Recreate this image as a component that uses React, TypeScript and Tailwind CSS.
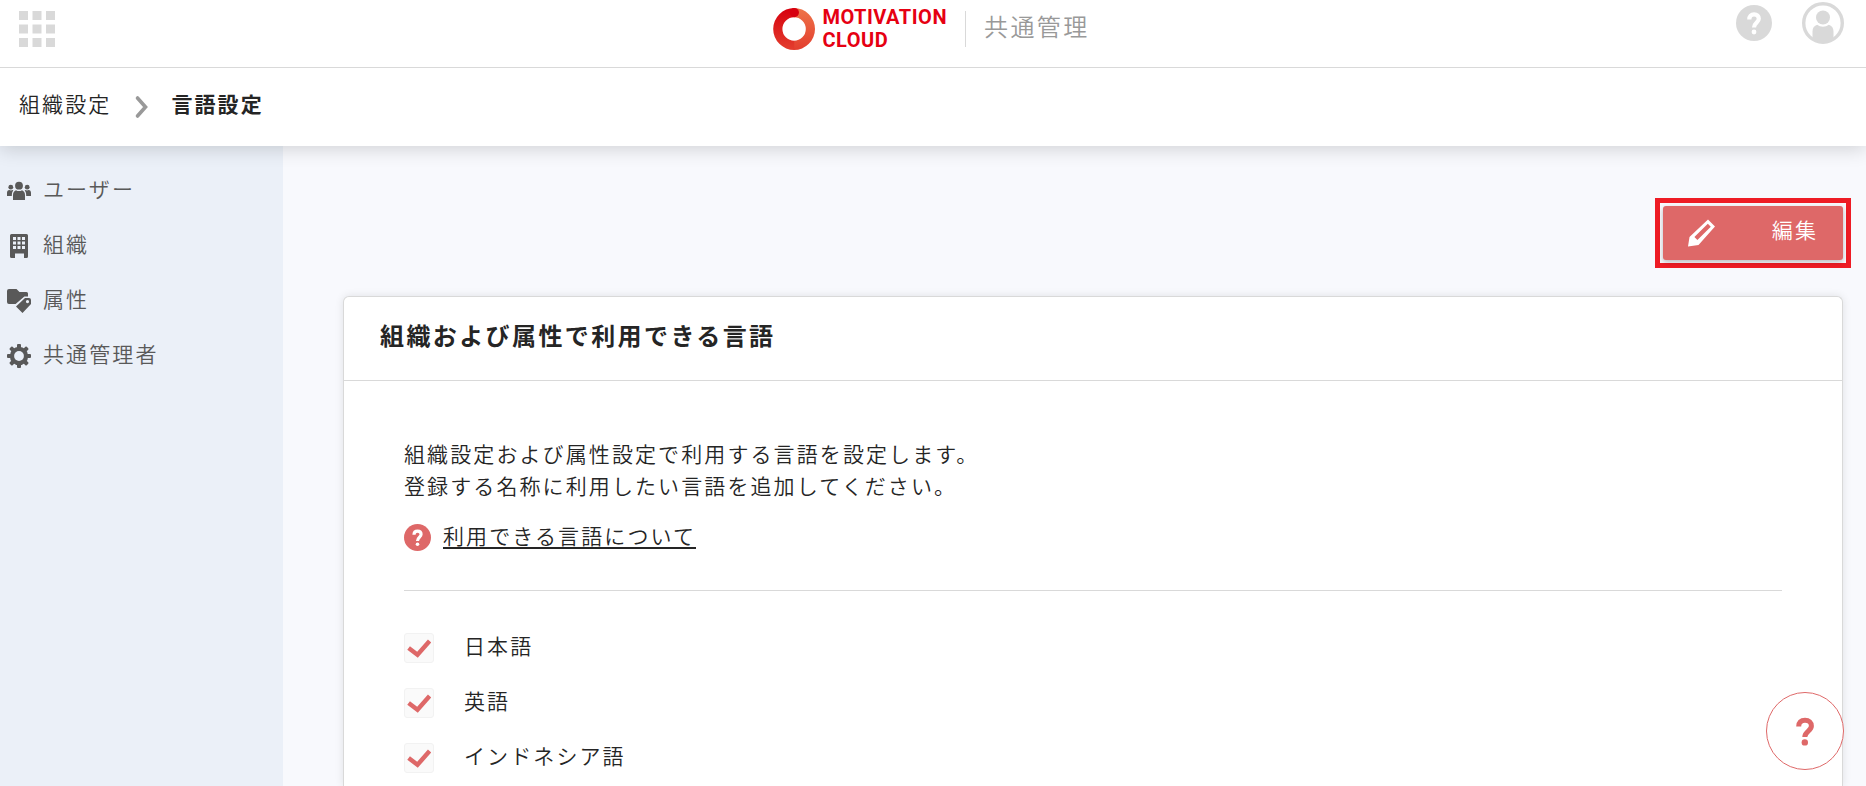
import { useState } from 'react';
import type { ReactNode } from 'react';

// -------------------------------------------------------------
// Icons
// -------------------------------------------------------------
function GridIcon() {
  return (
    <svg className="size-9" viewBox="0 0 24 24" fill="currentColor" aria-hidden="true">
      {[0, 9, 18].map((y) => [0, 9, 18].map((x) => <rect key={`${x}-${y}`} x={x} y={y} width="6" height="6" />))}
    </svg>
  );
}

function HelpIcon({ className }: { className: string }) {
  return (
    <svg className={className} viewBox="0 0 36 36" aria-hidden="true">
      <circle cx="18" cy="18" r="18" fill="currentColor" />
      <path d="M13.3 14.4C13.3 11.4 15.2 9.4 18.1 9.4C21 9.4 22.8 11.2 22.8 13.7C22.8 17.4 18 17.6 18 22.6" fill="none" stroke="#fff" strokeWidth="4.2" />
      <circle cx="18" cy="27" r="2.4" fill="#fff" />
    </svg>
  );
}

function UserIcon() {
  return (
    <svg className="size-[42px]" viewBox="0 0 42 42" aria-hidden="true">
      <circle cx="21" cy="21" r="19.3" fill="none" stroke="currentColor" strokeWidth="3.4" />
      <circle cx="21" cy="15.5" r="7" fill="currentColor" />
      <path d="M10.5 37V29.5C10.5 26 12.3 23.6 15.2 22.8C18.4 25.4 23.6 25.4 26.8 22.8C29.7 23.6 31.5 26 31.5 29.5V37C25 41.5 17 41.5 10.5 37Z" fill="currentColor" />
    </svg>
  );
}

function LogoMark() {
  return (
    <svg className="size-[42px]" viewBox="0 0 42 42" fill="none" aria-hidden="true">
      <defs>
        <linearGradient id="logo-left" x1="0" y1="0" x2="0" y2="1">
          <stop offset="0" stopColor="#d7000f" />
          <stop offset="0.4" stopColor="#dc1a1b" />
          <stop offset="1" stopColor="#e33e2e" />
        </linearGradient>
        <linearGradient id="logo-right" x1="0" y1="0" x2="0" y2="1">
          <stop offset="0" stopColor="#ee7449" />
          <stop offset="1" stopColor="#e33e2e" />
        </linearGradient>
      </defs>
      <path d="M21 0A21 21 0 0 1 21 42V32.8A11.8 11.8 0 0 0 21 9.2Z" fill="url(#logo-right)" />
      <path d="M21.2 0A21 21 0 0 0 21.2 42V32.8A11.8 11.8 0 0 1 21.2 9.2Z" fill="url(#logo-left)" />
      <circle cx="21.4" cy="4.6" r="4.6" fill="#d7000f" />
    </svg>
  );
}

function UsersIcon() {
  return (
    <svg className="size-6" viewBox="0 0 24 24" fill="currentColor" aria-hidden="true">
      <circle cx="12" cy="6.7" r="3.9" />
      <circle cx="3.8" cy="8.2" r="2.4" />
      <circle cx="20.2" cy="8.2" r="2.4" />
      <path d="M6 21V16C6 13.4 7.2 11.8 9 11.2C10.8 12.4 13.2 12.4 15 11.2C16.8 11.8 18 13.4 18 16V21Z" />
      <path d="M0 17V13.8C0 12 .9 11.2 2.3 11C3.3 11.6 4.5 11.6 5.6 11.1L6.3 11.6C5.3 12.8 4.8 14.2 4.8 17Z" />
      <path d="M24 17V13.8C24 12 23.1 11.2 21.7 11C20.7 11.6 19.5 11.6 18.4 11.1L17.7 11.6C18.7 12.8 19.2 14.2 19.2 17Z" />
    </svg>
  );
}

function BuildingIcon() {
  return (
    <svg className="size-6" viewBox="0 0 24 24" fill="currentColor" aria-hidden="true">
      <path
        fillRule="evenodd"
        d="M4.5 0H19.5Q21 0 21 1.5V22.5Q21 24 19.5 24H17V19.5H8V24H4.5Q3 24 3 22.5V1.5Q3 0 4.5 0ZM6 3V6H9V3ZM10.5 3V6H13.5V3ZM15 3V6H18V3ZM6 7.5V10.5H9V7.5ZM10.5 7.5V10.5H13.5V7.5ZM15 7.5V10.5H18V7.5ZM6 12V15H9V12ZM10.5 12V15H13.5V12ZM15 12V15H18V12Z"
      />
    </svg>
  );
}

function AttributeIcon() {
  return (
    <svg className="size-6" viewBox="0 0 24 24" fill="currentColor" aria-hidden="true">
      <path d="M2 0H9.5L12.5 3H19.5Q21 3 21 4.5V7.4H17.4L8.6 15H2Q0 15 0 13V2Q0 0 2 0Z" />
      <path fillRule="evenodd" d="M18 9H22Q24 9 24 11V15L15.5 24L9 17.5ZM20.5 11A1.6 1.6 0 1 0 20.5 14.2A1.6 1.6 0 1 0 20.5 11Z" />
    </svg>
  );
}

function GearIcon() {
  return (
    <svg className="size-6" viewBox="0 0 24 24" aria-hidden="true">
      <g fill="currentColor">
        {[0, 45, 90, 135].map((angle) => (
          <rect key={angle} x="10" y="0" width="4" height="24" rx="1" transform={`rotate(${angle} 12 12)`} />
        ))}
      </g>
      <circle cx="12" cy="12" r="7" fill="none" stroke="currentColor" strokeWidth="4.4" />
      <circle cx="12" cy="12" r="4.9" fill="#ebf0f8" />
    </svg>
  );
}

// -------------------------------------------------------------
// Data
// -------------------------------------------------------------
const menu: { label: string; icon: ReactNode }[] = [
  { label: 'ユーザー', icon: <UsersIcon /> },
  { label: '組織', icon: <BuildingIcon /> },
  { label: '属性', icon: <AttributeIcon /> },
  { label: '共通管理者', icon: <GearIcon /> },
];

const languages = [
  { id: 'ja', label: '日本語' },
  { id: 'en', label: '英語' },
  { id: 'id', label: 'インドネシア語' },
];

function LanguageCheckbox({ label, checked, onChange }: { label: string; checked: boolean; onChange: () => void }) {
  return (
    <label className="flex h-[30px] items-center gap-[30px]">
      <span className="grid size-[30px] place-items-center">
        <input
          type="checkbox"
          checked={checked}
          onChange={onChange}
          className="col-start-1 row-start-1 size-[30px] appearance-none rounded-[3px] border border-[#f2f2f2] bg-[#fafafa]"
        />
        {checked && (
          <svg className="pointer-events-none col-start-1 row-start-1 size-6" viewBox="0 0 24 24" aria-hidden="true">
            <path d="M1.6 12L10.5 18.8L22.6 5" fill="none" stroke="#de6868" strokeWidth="4.4" />
          </svg>
        )}
      </span>
      <span className="pb-1.5">{label}</span>
    </label>
  );
}

export default function App() {
  const [selected, setSelected] = useState<string[]>(['ja', 'en', 'id']);

  const toggle = (id: string) => {
    setSelected((prev) => (prev.includes(id) ? prev.filter((x) => x !== id) : [...prev, id]));
  };

  return (
    <div className="flex min-h-screen flex-col bg-[#f8f9fd] font-['Noto_Sans_CJK_JP',sans-serif] text-[21px] leading-8 font-[350] tracking-widest text-[#252525]">
      <header className="relative z-10 grid h-[68px] grid-cols-[1fr_auto_1fr] border-b border-[#d9d9d9] bg-white pr-[22px] pl-[19px] text-[#d9d9d9]">
        <button type="button" aria-label="メニュー" className="mt-[11px] size-9">
          <GridIcon />
        </button>
        <div className="flex h-[58px] items-center">
          <a href="#" className="flex items-center gap-[7px]">
            <LogoMark />
            <span className="font-['Roboto',sans-serif] text-xl leading-[23px] font-bold tracking-wide text-[#e60012]">
              MOTIVATION
              <br />
              CLOUD
            </span>
          </a>
          <span className="mx-[18px] h-9 w-px bg-[#d9d9d9]" />
          <span className="pb-1.5 text-2xl tracking-widest text-[#999]">共通管理</span>
        </div>
        <div className="flex h-[46px] items-center justify-end gap-[30px]">
          <button type="button" aria-label="ヘルプ">
            <HelpIcon className="size-9" />
          </button>
          <button type="button" aria-label="アカウント">
            <UserIcon />
          </button>
        </div>
      </header>

      <nav aria-label="パンくず" className="relative flex h-[78px] items-center bg-white pl-[19px] shadow-[0_3px_18px_rgba(0,0,0,0.16)]">
        <a href="#" className="pb-2">組織設定</a>
        <svg className="mr-[21px] ml-[23px] h-6 w-4" viewBox="0 0 16 24" aria-hidden="true">
          <path d="M3.5 3L11.5 12L3.5 21" fill="none" stroke="#999" strokeWidth="3.6" strokeLinecap="round" />
        </svg>
        <span className="pb-2 font-bold" aria-current="page">言語設定</span>
      </nav>

      <div className="flex flex-1">
        <aside className="w-[283px] shrink-0 bg-[#ebf0f8] pt-[25px] text-[#595959]">
          <ul className="flex flex-col gap-[15px]">
            {menu.map((item) => (
              <li key={item.label}>
                <a href="#" className="flex h-10 items-center gap-3 pl-[7px]">
                  {item.icon}
                  <span className="pb-1.5">{item.label}</span>
                </a>
              </li>
            ))}
          </ul>
        </aside>

        <main className="flex min-w-0 flex-1 flex-col pt-[52px] pr-[15px] pl-[60px]">
          <div className="self-end border-5 border-[#ee1c25] p-[3px]">
            <button
              type="button"
              className="flex h-[54px] w-[180px] items-center justify-between rounded-[3px] bg-[#de6868] px-[25px] text-white shadow-[0_2px_5px_rgba(0,0,0,0.25)]"
            >
              <svg className="size-7" viewBox="0 0 28 28" aria-hidden="true">
                <path
                  d="M20 0.5L27 7.5L10.5 26L0 27.5L1.5 18ZM19.8 4.8L6.4 18L9.4 21L22.8 7.8Z"
                  fill="currentColor"
                  fillRule="evenodd"
                />
              </svg>
              <span className="pb-2">編集</span>
            </button>
          </div>

          <section className="mt-7 mr-2 flex-1 rounded-t-md border border-b-0 border-[#d9d9d9] bg-white shadow-[0_0_8px_rgba(0,0,0,0.1)]">
            <h1 className="border-b border-[#d9d9d9] px-9 pt-[22px] pb-[29px] text-2xl leading-8 font-bold tracking-widest">
              組織および属性で利用できる言語
            </h1>
            <div className="px-[60px] pt-14 pb-2">
              <p>
                組織設定および属性設定で利用する言語を設定します。
                <br />
                登録する名称に利用したい言語を追加してください。
              </p>
              <div className="mt-[23px] flex h-[27px] items-center gap-3">
                <HelpIcon className="size-[27px] text-[#de6868]" />
                <a href="#" className="mb-1 border-b-2 border-[#252525] leading-6">利用できる言語について</a>
              </div>
              <ul className="mt-[39px] flex flex-col gap-[25px] border-t border-[#d9d9d9] pt-[42px]">
                {languages.map((lang) => (
                  <li key={lang.id}>
                    <LanguageCheckbox label={lang.label} checked={selected.includes(lang.id)} onChange={() => toggle(lang.id)} />
                  </li>
                ))}
              </ul>
            </div>
          </section>
        </main>
      </div>

      <button
        type="button"
        aria-label="サポート"
        className="fixed right-[22px] bottom-4 flex size-[78px] items-center justify-center rounded-full border border-[#de6868] bg-white text-[#de6868]"
      >
        <svg className="size-8" viewBox="0 0 32 32" aria-hidden="true">
          <path d="M9.7 11.4C9.7 7.6 12 5.2 16 5.2C20 5.2 22.4 7.6 22.4 11C22.4 15.8 15.8 16.4 15.8 22" fill="none" stroke="currentColor" strokeWidth="5" />
          <circle cx="15.8" cy="27.4" r="3.2" fill="currentColor" />
        </svg>
      </button>
    </div>
  );
}
